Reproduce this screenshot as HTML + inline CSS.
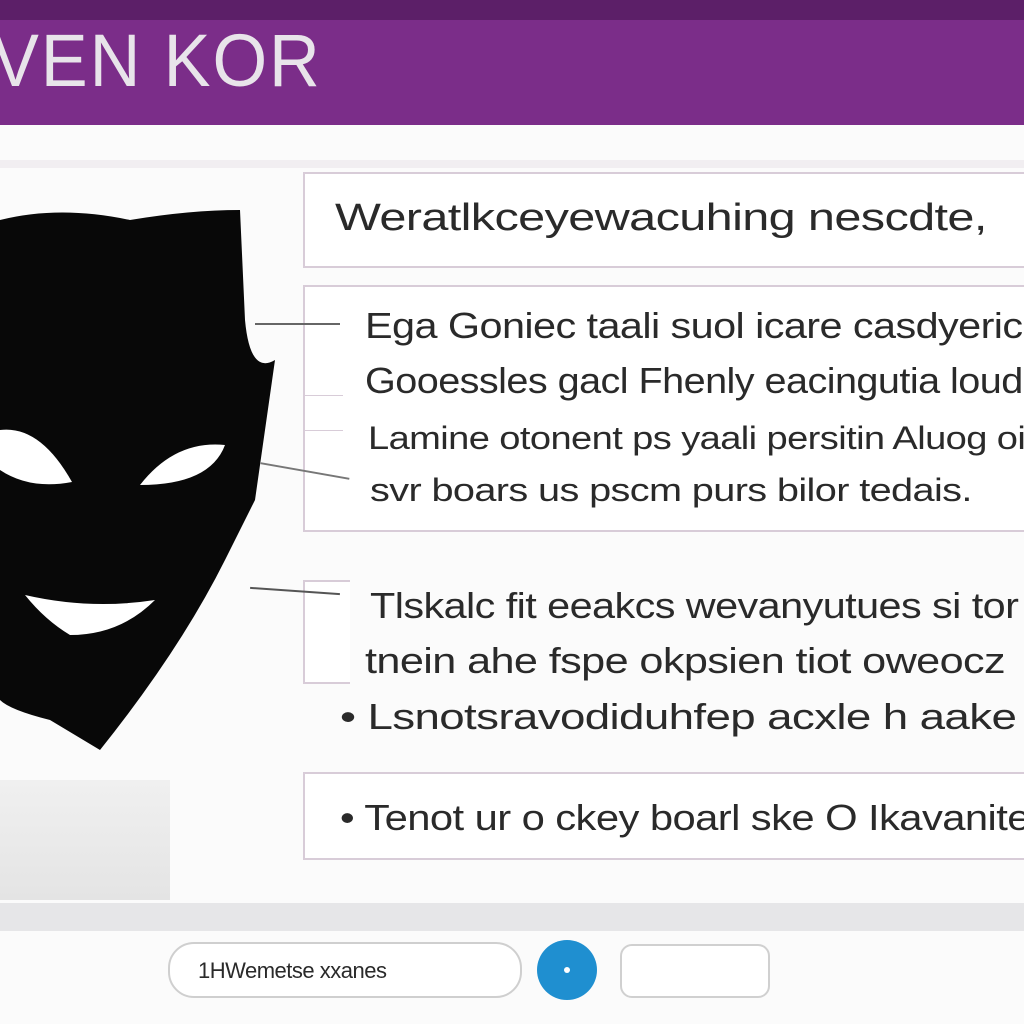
<!DOCTYPE html>
<html><head><style>
body{margin:0;width:1024px;height:1024px;background:#fbfbfb;position:relative;overflow:hidden;font-family:"Liberation Sans",sans-serif;color:#2a2a2a}
.a{position:absolute}
.box{position:absolute;border:2px solid #d8ccd8;background:#fff}
.t{position:absolute;font-size:36px;white-space:nowrap;letter-spacing:-0.5px;transform-origin:left center}
</style></head><body>
<div class="a" style="left:0;top:0;width:1024px;height:125px;background:#7b2d89"></div>
<div class="a" style="left:0;top:0;width:1024px;height:20px;background:#5c1f68"></div>
<div class="a" style="left:-8px;top:18px;font-size:74px;color:#e8e4ea;font-weight:300;letter-spacing:2px;transform:scaleX(0.95);transform-origin:left">VEN KOR</div>
<div class="a" style="left:0;top:160px;width:1024px;height:8px;background:#f1eef1"></div>
<div class="box" style="left:303px;top:172px;width:730px;height:92px"></div>
<div class="t" style="left:335px;top:197px;font-size:38px;transform:scaleX(1.28)">Weratlkceyewacuhing nescdte,</div>
<div class="box" style="left:303px;top:285px;width:730px;height:243px"></div>
<div class="a" style="left:303px;top:395px;width:40px;height:1px;background:#d8ccd8"></div>
<div class="a" style="left:303px;top:430px;width:40px;height:1px;background:#d8ccd8"></div>
<div class="t" style="left:365px;top:305px;transform:scaleX(1.15)">Ega Goniec taali suol icare casdyeric</div>
<div class="t" style="left:365px;top:360px;transform:scaleX(1.1)">Gooessles gacl Fhenly eacingutia loud</div>
<div class="t" style="left:368px;top:420px;font-size:32px;transform:scaleX(1.19)">Lamine otonent ps yaali persitin Aluog oi</div>
<div class="t" style="left:370px;top:472px;font-size:32px;transform:scaleX(1.24)">svr boars us pscm purs bilor tedais.</div>
<div class="a" style="left:255px;top:323px;width:85px;height:2px;background:#666"></div>
<div class="a" style="left:260px;top:470px;width:90px;height:2px;background:#777;transform:rotate(10deg)"></div>
<div class="a" style="left:303px;top:580px;width:45px;height:100px;border:2px solid #d8ccd8;border-right:none;background:#fff"></div>
<div class="a" style="left:250px;top:590px;width:90px;height:2px;background:#555;transform:rotate(4deg)"></div>
<div class="t" style="left:370px;top:585px;transform:scaleX(1.15)">Tlskalc fit eeakcs wevanyutues si tor</div>
<div class="t" style="left:365px;top:640px;transform:scaleX(1.2)">tnein ahe fspe okpsien tiot oweocz</div>
<div class="t" style="left:340px;top:696px;transform:scaleX(1.27)">• Lsnotsravodiduhfep acxle h aake</div>
<div class="box" style="left:303px;top:772px;width:730px;height:84px"></div>
<div class="t" style="left:340px;top:797px;transform:scaleX(1.16)">• Tenot ur o ckey boarl ske O Ikavanite</div>
<svg class="a" style="left:0;top:200px" width="290" height="560" viewBox="0 0 290 560">
<path d="M0 20 Q60 5 130 20 Q190 10 240 10 L245 120 Q250 175 275 160 L255 300 Q240 330 225 360 Q180 450 100 550 L50 520 Q10 510 0 500 Z" fill="#080808"/>
<path d="M0 230 Q40 225 72 282 Q30 290 0 270 Z" fill="#fff"/>
<path d="M140 285 Q175 240 225 245 Q210 285 140 285 Z" fill="#fff"/>
<path d="M25 395 Q90 410 155 400 Q120 435 70 435 Q45 420 25 395 Z" fill="#fff"/>
</svg>
<div class="a" style="left:0;top:780px;width:170px;height:120px;background:linear-gradient(#f0f0f0,#e4e4e4)"></div>
<div class="a" style="left:0;top:903px;width:1024px;height:28px;background:#e6e6e8"></div>
<div class="a" style="left:168px;top:942px;width:350px;height:52px;border:2px solid #cfcfcf;border-radius:26px;background:#fff"></div>
<div class="t" style="left:198px;top:958px;font-size:22px">1HWemetse xxanes</div>
<div class="a" style="left:537px;top:940px;width:60px;height:60px;border-radius:50%;background:#1f8fd0"></div>
<div class="a" style="left:564px;top:967px;width:6px;height:6px;border-radius:50%;background:#fff"></div>
<div class="a" style="left:620px;top:944px;width:146px;height:50px;border:2px solid #d0d0d0;border-radius:12px;background:#fff"></div>
</body></html>
